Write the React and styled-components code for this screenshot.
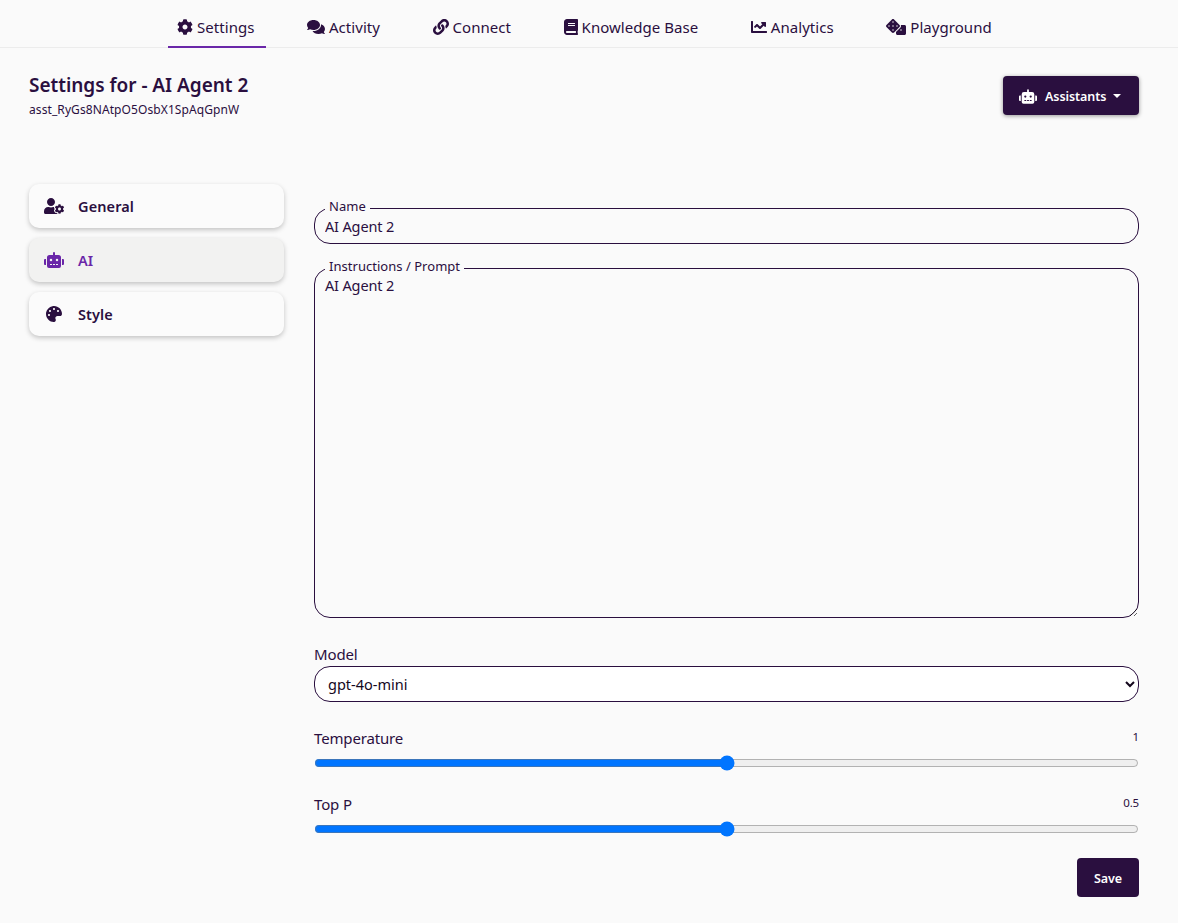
import React, { useState } from "react";
import styled, { createGlobalStyle } from "styled-components";
import {
  FaCog,
  FaComments,
  FaLink,
  FaBook,
  FaChartLine,
  FaDice,
  FaUserCog,
  FaRobot,
  FaPalette,
} from "react-icons/fa";

const tabs = [
  { label: "Settings", icon: <FaCog />, iconWidth: 16 },
  { label: "Activity", icon: <FaComments />, iconWidth: 18 },
  { label: "Connect", icon: <FaLink />, iconWidth: 16 },
  { label: "Knowledge Base", icon: <FaBook />, iconWidth: 14 },
  { label: "Analytics", icon: <FaChartLine />, iconWidth: 16 },
  { label: "Playground", icon: <FaDice />, iconWidth: 20 },
];

const sections = [
  { label: "General", icon: <FaUserCog /> },
  { label: "AI", icon: <FaRobot />, active: true },
  { label: "Style", icon: <FaPalette /> },
];

export default function App() {
  const [temperature, setTemperature] = useState(1);
  const [topP, setTopP] = useState(0.5);

  return (
    <>
      <GlobalStyle />
      <TopNav>
        {tabs.map((tab, i) => (
          <Tab key={tab.label} $active={i === 0} $iconWidth={tab.iconWidth}>
            {tab.icon}
            {tab.label}
          </Tab>
        ))}
      </TopNav>
      <Page>
        <TitleRow>
          <div>
            <Title>Settings for - AI Agent 2</Title>
            <AssistantId>asst_RyGs8NAtpO5OsbX1SpAqGpnW</AssistantId>
          </div>
          <AssistantsButton>
            <FaRobot />
            Assistants
            <Caret />
          </AssistantsButton>
        </TitleRow>
        <Columns>
          <Sidebar>
            {sections.map((section) => (
              <SideItem key={section.label} $active={section.active}>
                <SideIcon>{section.icon}</SideIcon>
                {section.label}
              </SideItem>
            ))}
          </Sidebar>
          <Form>
            <Field>
              <FieldLegend>Name</FieldLegend>
              <TextInput defaultValue="AI Agent 2" />
            </Field>
            <PromptField>
              <FieldLegend>Instructions / Prompt</FieldLegend>
              <PromptInput defaultValue="AI Agent 2" />
            </PromptField>
            <ModelLabel>Model</ModelLabel>
            <ModelSelect defaultValue="gpt-4o-mini">
              <option>gpt-4o-mini</option>
              <option>gpt-4o</option>
              <option>gpt-4</option>
            </ModelSelect>
            <SliderHead $first>
              <SliderLabel>Temperature</SliderLabel>
              <SliderValue>{temperature}</SliderValue>
            </SliderHead>
            <Slider
              min={0}
              max={2}
              step={0.1}
              value={temperature}
              onChange={(e) => setTemperature(Number(e.target.value))}
            />
            <SliderHead>
              <SliderLabel>Top P</SliderLabel>
              <SliderValue>{topP}</SliderValue>
            </SliderHead>
            <Slider
              min={0}
              max={1}
              step={0.1}
              value={topP}
              onChange={(e) => setTopP(Number(e.target.value))}
            />
            <SaveRow>
              <SaveButton type="button">Save</SaveButton>
            </SaveRow>
          </Form>
        </Columns>
      </Page>
    </>
  );
}

const GlobalStyle = createGlobalStyle`
  * {
    box-sizing: border-box;
  }

  html,
  body {
    margin: 0;
    height: 100%;
    background: #fafafa;
    color: #2a0f3f;
    font-family: "Noto Sans", "Open Sans", sans-serif;
    overflow: hidden;
  }
`;

const TopNav = styled.nav`
  display: flex;
  justify-content: flex-start;
  gap: 31.5px;
  height: 48px;
  padding-left: 168px;
  border-bottom: 1px solid #ececec;
`;

const Tab = styled.a`
  display: flex;
  align-items: center;
  gap: 4px;
  height: 48px;
  padding: 9px 12px 2px 9px;
  font-size: 15px;
  letter-spacing: 0.05px;
  color: #2a0f3f;
  border-bottom: 2px solid ${(p) => (p.$active ? "#6a27a8" : "transparent")};

  svg {
    flex: none;
    width: ${(p) => p.$iconWidth}px;
    height: 16px;
  }
`;

const Page = styled.main`
  padding: 0 39px 0 29px;
`;

const TitleRow = styled.header`
  display: flex;
  justify-content: space-between;
  align-items: flex-start;
  padding-top: 24px;
  height: 136px;
`;

const Title = styled.h1`
  margin: 0;
  font-size: 19px;
  line-height: 27px;
  font-weight: 600;
  letter-spacing: -0.02px;
`;

const AssistantId = styled.div`
  font-size: 12px;
  line-height: 21px;
  letter-spacing: 0.09px;
`;

const AssistantsButton = styled.button`
  display: flex;
  align-items: center;
  width: 136px;
  height: 39px;
  margin-top: 4px;
  padding: 1px 0 0 16px;
  border: 0;
  border-radius: 4px;
  background: #2a0f3f;
  color: #fff;
  font: 600 12.5px "Noto Sans", sans-serif;
  letter-spacing: -0.08px;
  box-shadow: 0 1px 4px rgba(0, 0, 0, 0.4);

  svg {
    width: 18px;
    height: 15px;
    margin-right: 8px;
  }
`;

const Caret = styled.span`
  width: 0;
  height: 0;
  margin-left: 7px;
  border-top: 4px solid #fff;
  border-left: 4px solid transparent;
  border-right: 4px solid transparent;
`;

const Columns = styled.div`
  display: grid;
  grid-template-columns: 255px 825px;
  column-gap: 30px;
`;

const Sidebar = styled.aside`
  display: flex;
  flex-direction: column;
  gap: 10px;
`;

const SideItem = styled.div`
  display: flex;
  align-items: center;
  height: 44px;
  padding: 0 0 1px 15px;
  border-radius: 10px;
  font-size: 14.5px;
  font-weight: 600;
  letter-spacing: 0.1px;
  color: ${(p) => (p.$active ? "#6a27a8" : "#2a0f3f")};
  background: ${(p) => (p.$active ? "#f2f2f1" : "#fbfbfb")};
  box-shadow: 0 2px 5px rgba(0, 0, 0, 0.22);
`;

const SideIcon = styled.span`
  display: flex;
  justify-content: center;
  width: 20px;
  margin-right: 14px;

  svg {
    width: 20px;
    height: 16px;
  }
`;

const Form = styled.form`
  display: flex;
  flex-direction: column;
  padding-top: 14px;
`;

const Field = styled.fieldset`
  display: block;
  min-width: 0;
  height: 46px;
  margin: 0;
  padding: 0 10px;
  border: 1px solid #2a0f3f;
  border-radius: 16px;
`;

const PromptField = styled(Field)`
  height: 360px;
  margin-top: 14px;
`;

const FieldLegend = styled.legend`
  margin-left: 0;
  padding: 0 4px 4px;
  font-size: 13px;
  line-height: 17px;
  letter-spacing: 0.03px;
`;

const TextInput = styled.input`
  display: block;
  width: 100%;
  height: 24px;
  margin-top: -5px;
  padding: 0;
  border: 0;
  outline: 0;
  background: transparent;
  color: #2a0f3f;
  font: 14.5px "Noto Sans", sans-serif;
  letter-spacing: -0.15px;
`;

const PromptInput = styled.textarea`
  display: block;
  width: calc(100% + 20px);
  height: 343px;
  margin: -5px -10px 0;
  padding: 0 10px;
  border: 0;
  border-radius: 0 0 16px 16px;
  outline: 0;
  background: transparent;
  color: #2a0f3f;
  font: 14.5px/22px "Noto Sans", sans-serif;
  letter-spacing: -0.15px;
`;

const ModelLabel = styled.label`
  margin-top: 26px;
  font-size: 15px;
  line-height: 20px;
  letter-spacing: -0.15px;
`;

const ModelSelect = styled.select`
  display: block;
  height: 36px;
  margin-top: 2px;
  padding: 0 9px;
  border: 1px solid #2a0f3f;
  border-radius: 16px;
  outline: 0;
  background: #fff;
  color: #14081d;
  font: 14.5px "Noto Sans", sans-serif;
  letter-spacing: 0;
`;

const SliderHead = styled.div`
  display: flex;
  justify-content: space-between;
  height: 20px;
  margin-top: ${(p) => (p.$first ? "26px" : "23px")};
`;

const SliderLabel = styled.span`
  font-size: 15px;
  line-height: 20px;
  letter-spacing: -0.15px;
`;

const SliderValue = styled.span`
  font-size: 11.5px;
  line-height: 18px;
  letter-spacing: -0.2px;
`;

const Slider = styled.input.attrs({ type: "range" })`
  display: block;
  width: 100%;
  height: 16px;
  margin: 7px 0 0;
`;

const SaveRow = styled.div`
  display: flex;
  justify-content: flex-end;
  margin-top: 21px;
`;

const SaveButton = styled.button`
  width: 62px;
  height: 39px;
  padding: 1px 0 0;
  border: 0;
  border-radius: 4px;
  background: #2a0f3f;
  color: #fff;
  font: 600 12.5px "Noto Sans", sans-serif;
  letter-spacing: -0.08px;
`;
